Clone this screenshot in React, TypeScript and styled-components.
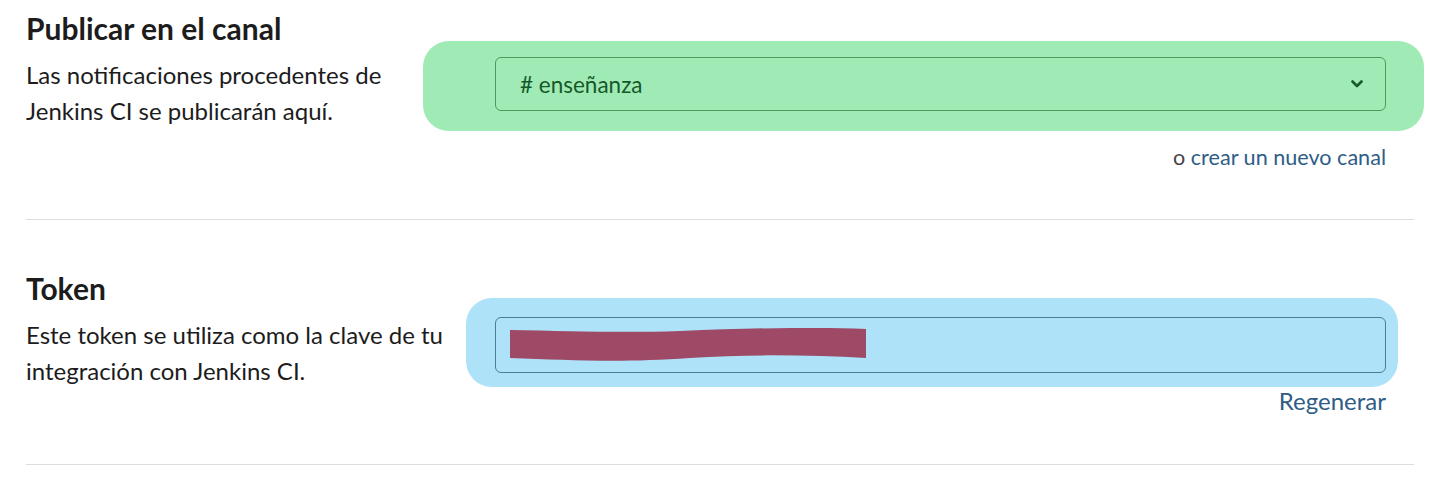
import React from "react";
import styled, { createGlobalStyle } from "styled-components";

const Global = createGlobalStyle`
  html, body { margin: 0; padding: 0; background: #ffffff; }
  body { font-family: Lato, "Noto Sans", sans-serif; color: #1d1c1d; }
`;

const Page = styled.div`
  padding: 0 23px 0 26px;
`;

const Section = styled.section<{ $first?: boolean }>`
  display: grid;
  grid-template-columns: 430px 1fr;
  column-gap: 39px;
  padding: ${(p) => (p.$first ? "6px" : "46px")} 0 0;
  border-bottom: 1px solid #dddddd;
`;

const Info = styled.div`
  display: flex;
  flex-direction: column;
`;

const Title = styled.h2`
  margin: 0;
  font-size: 30px;
  font-weight: 700;
  line-height: 44px;
  color: #1d1c1d;
`;

const Desc = styled.p`
  margin: 7px 0 0;
  font-size: 24px;
  line-height: 36px;
  color: #1d1c1d;
`;

const Controls = styled.div`
  display: flex;
  flex-direction: column;
  align-items: stretch;
  padding: 0 28px 0 0;
  margin-top: 51px;
`;

const Highlight = styled.div<{ $color: string; $l: number; $r: number; $t: number; $b: number }>`
  position: relative;
  &::before {
    content: "";
    position: absolute;
    left: ${(p) => -p.$l}px;
    right: ${(p) => -p.$r}px;
    top: ${(p) => -p.$t}px;
    bottom: ${(p) => -p.$b}px;
    background: ${(p) => p.$color};
    border-radius: 26px;
    z-index: 0;
  }
`;

const Select = styled.div`
  position: relative;
  z-index: 1;
  height: 54px;
  box-sizing: border-box;
  border: 1px solid #4f9760;
  border-radius: 6px;
  display: flex;
  align-items: center;
  justify-content: space-between;
  padding: 0 22px 0 24px;
  font-size: 22.5px;
  color: #15592a;
`;

const Input = styled.div`
  position: relative;
  z-index: 1;
  height: 56px;
  box-sizing: border-box;
  border: 1px solid #4d7b9b;
  border-radius: 6px;
  display: flex;
  align-items: center;
  padding: 0 0 0 14px;
`;

const Aside = styled.div<{ $mt: number; $mb: number; $size: number }>`
  align-self: flex-end;
  margin-top: ${(p) => p.$mt}px;
  margin-bottom: ${(p) => p.$mb}px;
  font-size: ${(p) => p.$size}px;
  line-height: 30px;
  color: #454545;
`;

const Link = styled.a`
  color: #2f5d86;
  text-decoration: none;
`;

const Chevron = () => (
  <svg width="12" height="8" viewBox="0 0 12 8" fill="none">
    <path d="M1.5 1.5 L6 6 L10.5 1.5" stroke="#15592a" strokeWidth="2.6" strokeLinecap="round" strokeLinejoin="round" />
  </svg>
);

const Scribble = () => (
  <svg width="358" height="34" viewBox="0 0 358 34">
    <path
      d="M0 2 C60 3 110 5 170 3 C240 0 300 -1 356 1 L356 30 C300 27 240 26 180 30 C110 35 60 32 0 30 Z"
      fill="#9e4a66"
    />
  </svg>
);

export default function App() {
  return (
    <>
      <Global />
      <Page>
        <Section $first>
          <Info>
            <Title>Publicar en el canal</Title>
            <Desc>
              Las notificaciones procedentes de Jenkins CI se publicarán aquí.
            </Desc>
          </Info>
          <Controls>
            <Highlight $color="#a0ebb5" $l={72} $r={38} $t={16} $b={20}>
              <Select>
                <span># enseñanza</span>
                <Chevron />
              </Select>
            </Highlight>
            <Aside $mt={31} $mb={47} $size={21.6}>
              o <Link href="#">crear un nuevo canal</Link>
            </Aside>
          </Controls>
        </Section>
        <Section>
          <Info>
            <Title>Token</Title>
            <Desc>Este token se utiliza como la clave de tu integración con Jenkins CI.</Desc>
          </Info>
          <Controls>
            <Highlight $color="#ade2f9" $l={29} $r={12} $t={19} $b={14}>
              <Input>
                <Scribble />
              </Input>
            </Highlight>
            <Aside $mt={13} $mb={48} $size={24}>
              <Link href="#">Regenerar</Link>
            </Aside>
          </Controls>
        </Section>
      </Page>
    </>
  );
}
